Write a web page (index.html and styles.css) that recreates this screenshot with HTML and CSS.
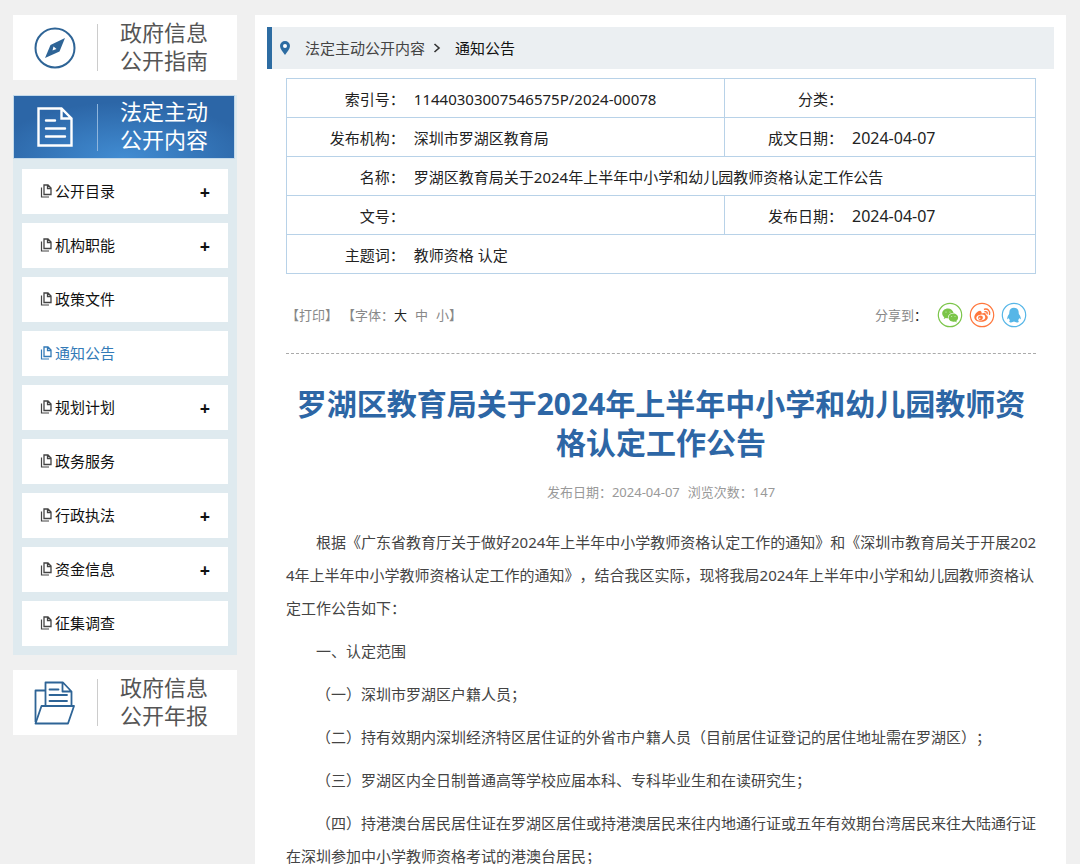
FILE: index.html
```html
<!DOCTYPE html>
<html lang="zh-CN">
<head>
<meta charset="utf-8">
<meta name="viewport" content="width=device-width, initial-scale=1">
<title>罗湖区教育局关于2024年上半年中小学和幼儿园教师资格认定工作公告</title>
<link rel="stylesheet" href="styles.css">
</head>
<body>
<svg class="sprite" aria-hidden="true">
  <symbol id="pages" viewBox="0 0 12 14">
    <path d="M4 1h4l3 3v6.500H4z M7.500 1v3.500H11" fill="none" stroke="currentColor" stroke-width="1.300"/>
    <path d="M1.500 3.500v9.500h7.500" fill="none" stroke="currentColor" stroke-width="1.200"/>
  </symbol>
</svg>
<div class="page">
  <aside class="sidebar">
    <a class="entry" href="#">
      <span class="entry-icon">
        <svg width="42" height="42" viewBox="0 0 42 42"><circle cx="21" cy="21" r="19.500" fill="none" stroke="#2e6496" stroke-width="2"/><path d="M31 11 25.500 24.500 11 31 16.500 18z" fill="#2e6496"/><path d="M18.500 23.500l1-4 3 2.500z" fill="#fff"/></svg>
      </span>
      <span class="entry-text">政府信息<br>公开指南</span>
    </a>
    <section class="group">
      <a class="entry entry-active" href="#">
        <span class="entry-icon">
          <svg width="36" height="40" viewBox="0 0 36 40" fill="none" stroke="#fff"><path d="M1.500 1.500h23l10 10v27h-33z M24.500 1.500v10h10" stroke-width="2.400"/><path d="M9 13.500h9M9 21.500h19M9 29.500h19" stroke-width="2.400" stroke-linecap="round"/></svg>
        </span>
        <span class="entry-text">法定主动<br>公开内容</span>
      </a>
      <ul class="menu">
        <li><a href="#"><svg class="pages"><use href="#pages"/></svg>公开目录</a><button aria-label="展开公开目录">+</button></li>
        <li><a href="#"><svg class="pages"><use href="#pages"/></svg>机构职能</a><button aria-label="展开机构职能">+</button></li>
        <li><a href="#"><svg class="pages"><use href="#pages"/></svg>政策文件</a></li>
        <li><a class="current" href="#"><svg class="pages"><use href="#pages"/></svg>通知公告</a></li>
        <li><a href="#"><svg class="pages"><use href="#pages"/></svg>规划计划</a><button aria-label="展开规划计划">+</button></li>
        <li><a href="#"><svg class="pages"><use href="#pages"/></svg>政务服务</a></li>
        <li><a href="#"><svg class="pages"><use href="#pages"/></svg>行政执法</a><button aria-label="展开行政执法">+</button></li>
        <li><a href="#"><svg class="pages"><use href="#pages"/></svg>资金信息</a><button aria-label="展开资金信息">+</button></li>
        <li><a href="#"><svg class="pages"><use href="#pages"/></svg>征集调查</a></li>
      </ul>
    </section>
    <a class="entry" href="#">
      <span class="entry-icon">
        <svg width="42" height="44" viewBox="0 0 42 44" fill="none" stroke="#2e6496" stroke-width="1.800" stroke-linejoin="round"><path d="M1.500 41V9.500h10M11.500 25V1.500h17.500l8.500 9V25M28.500 1.500v9h9"/><path d="M7.500 25h32.500l-6 17.500H1.500z"/><path d="M15.500 8.500h9M15.500 14h17.500M15.500 20h17.500" stroke-linecap="round"/></svg>
      </span>
      <span class="entry-text">政府信息<br>公开年报</span>
    </a>
  </aside>

  <main class="content">
    <nav class="crumbs" aria-label="当前位置">
      <svg class="pin" width="10" height="14" viewBox="0 0 10 14"><path d="M5 0a5 5 0 0 0-5 5c0 3 3 6 5 9 2-3 5-6 5-9a5 5 0 0 0-5-5z" fill="#2d6ca2"/><circle cx="5" cy="5" r="2" fill="#fff"/></svg>
      <a href="#">法定主动公开内容</a>
      <svg class="arrow" width="8" height="10" viewBox="0 0 8 10"><path d="M1.500 1l4.500 4-4.500 4" fill="none" stroke="#333" stroke-width="1.600"/></svg>
      <a class="here" href="#">通知公告</a>
    </nav>
    <div class="article-wrap">
      <table class="info">
        <colgroup><col class="c-label"><col class="c-wide"><col class="c-label"><col></colgroup>
        <tr><th scope="row">索引号：</th><td>11440303007546575P/2024-00078</td><th scope="row" class="split">分类：</th><td></td></tr>
        <tr><th scope="row">发布机构：</th><td>深圳市罗湖区教育局</td><th scope="row" class="split">成文日期：</th><td class="date">2024-04-07</td></tr>
        <tr><th scope="row">名称：</th><td colspan="3">罗湖区教育局关于2024年上半年中小学和幼儿园教师资格认定工作公告</td></tr>
        <tr><th scope="row">文号：</th><td></td><th scope="row" class="split">发布日期：</th><td class="date">2024-04-07</td></tr>
        <tr><th scope="row">主题词：</th><td colspan="3">教师资格 认定</td></tr>
      </table>
      <div class="tools">
        <div class="tools-left">
          <button>【打印】</button>
          <span class="sizes">【字体：<button class="on">大</button><button class="mid">中</button><button>小</button>】</span>
        </div>
        <div class="share">
          <span>分享到<b>：</b></span>
          <a href="#" aria-label="微信"><svg width="26" height="26" viewBox="0 0 26 26"><circle cx="13" cy="13" r="11.700" fill="#fff" stroke="#7bc549" stroke-width="1.200"/><path d="M11 6.500c-3.300 0-5.800 2.200-5.800 4.900 0 1.500.8 2.900 2.100 3.800l-.6 1.900 2.200-1.100c.7.200 1.400.3 2.100.3-.4-3.400 2.400-5.400 5.600-5.300-.6-2.600-3-4.500-5.600-4.500z" fill="#7bc549"/><path d="M16.300 11.500c-2.800 0-4.800 1.800-4.800 4.100s2.200 4.100 4.800 4.100c.6 0 1.200-.1 1.700-.2l1.800.9-.5-1.500c1.100-.8 1.800-1.900 1.800-3.300 0-2.300-2.200-4.100-4.800-4.100z" fill="#7bc549"/><g fill="#d9f0cb"><circle cx="9" cy="10" r=".6"/><circle cx="13" cy="10" r=".6"/><circle cx="14.700" cy="14.500" r=".5"/><circle cx="18" cy="14.500" r=".5"/></g></svg></a>
          <a href="#" aria-label="微博"><svg width="26" height="26" viewBox="0 0 26 26"><circle cx="13" cy="13" r="11.700" fill="#fff" stroke="#ff763b" stroke-width="1.200"/><path d="M11.500 9c-1.500-1-6.200 3-6.200 6.200 0 2.900 3.400 4.600 6.700 4.600 4.200 0 6.800-2.300 6.800-4.400 0-1.400-1-2-2-2.300.6-1.700-.8-2.700-4.200-1.500.2-1.200-.1-2.100-1.100-2.600z" fill="#ff763b"/><ellipse cx="11.800" cy="15.600" rx="4.500" ry="2.900" fill="#fff" transform="rotate(-8 11.800 15.600)"/><circle cx="11.500" cy="15.800" r="2.400" fill="#ff763b"/><circle cx="10.800" cy="16.300" r=".7" fill="#fff"/><path d="M15.500 7.200c3.300-.8 5.900 1.700 5 5M16 9.700c1.500-.3 2.500.7 2.100 2.100" fill="none" stroke="#ff763b" stroke-width="1.400" stroke-linecap="round"/></svg></a>
          <a href="#" aria-label="QQ"><svg width="26" height="26" viewBox="0 0 26 26"><circle cx="13" cy="13" r="11.700" fill="#fff" stroke="#56b6e7" stroke-width="1.200"/><path d="M13 5.700c-2.900 0-4.700 2-4.700 4.700 0 1.300-.2 1.700-.9 2.700-.9 1.300-1.300 2.700-1.100 3.800.2.700 1 .1 1.500-.8.200.9.600 1.600 1.200 2.200-.9.400-1.200 1.900.4 2.100 1.200.2 2.900-.2 3.600-.8.700.6 2.400 1 3.600.8 1.600-.2 1.300-1.700.4-2.100.6-.6 1-1.300 1.200-2.200.5.900 1.300 1.500 1.500.8.200-1.100-.2-2.500-1.100-3.800-.7-1-.9-1.400-.9-2.700 0-2.700-1.800-4.700-4.700-4.700z" fill="#56b6e7"/></svg></a>
        </div>
      </div>
      <article>
        <h1>罗湖区教育局关于2024年上半年中小学和幼儿园教师资格认定工作公告</h1>
        <p class="meta"><span>发布日期：2024-04-07</span><span>浏览次数：147</span></p>
        <div class="text">
          <p>根据《广东省教育厅关于做好2024年上半年中小学教师资格认定工作的通知》和《深圳市教育局关于开展2024年上半年中小学教师资格认定工作的通知》，结合我区实际，现将我局2024年上半年中小学和幼儿园教师资格认定工作公告如下：</p>
          <p>一、认定范围</p>
          <p>（一）深圳市罗湖区户籍人员；</p>
          <p>（二）持有效期内深圳经济特区居住证的外省市户籍人员（目前居住证登记的居住地址需在罗湖区）；</p>
          <p>（三）罗湖区内全日制普通高等学校应届本科、专科毕业生和在读研究生；</p>
          <p>（四）持港澳台居民居住证在罗湖区居住或持港澳居民来往内地通行证或五年有效期台湾居民来往大陆通行证在深圳参加中小学教师资格考试的港澳台居民；</p>
        </div>
      </article>
    </div>
  </main>
</div>
</body>
</html>
```

FILE: styles.css
```css
* { box-sizing: border-box; }
body {
  margin: 0;
  background: #f0f0f0;
  color: #222;
  font: 15px/24px "Noto Sans", "Noto Sans CJK SC", sans-serif;
  text-spacing-trim: space-all;
}
a { color: inherit; text-decoration: none; }
button {
  padding: 0;
  border: 0;
  background: none;
  color: inherit;
  font: inherit;
  cursor: pointer;
}
svg { display: block; flex: none; }
.sprite { position: absolute; width: 0; height: 0; }
.page {
  display: flex;
  align-items: flex-start;
  gap: 18px;
  padding: 15px 14px 0 13px;
}

.sidebar {
  flex: none;
  display: flex;
  flex-direction: column;
  gap: 15px;
  width: 224px;
}
.entry {
  display: flex;
  align-items: center;
  height: 65px;
  background: #fff;
  color: #555;
}
.entry-icon {
  display: flex;
  align-items: center;
  justify-content: center;
  width: 85px;
  height: 47px;
  border-right: 1px solid #ccc;
}
.entry-text { padding: 0 0 4px 22px; font-size: 22px; line-height: 28px; }
.group { background: #dfeaef; }
.entry-active {
  height: 64px;
  margin-right: 2px;
  border: 1px solid #c3d9ea;
  background: radial-gradient(ellipse 60% 90% at 50% 100%, #418cd2, #2c66a7);
  color: #fff;
}
.entry-active .entry-icon { width: 84px; padding-right: 2px; border-color: #8fb5dc; }
.menu {
  display: flex;
  flex-direction: column;
  gap: 9px;
  margin: 0;
  padding: 10px 9px 9px;
  list-style: none;
}
.menu li {
  display: flex;
  align-items: center;
  justify-content: space-between;
  height: 45px;
  padding: 0 18px 2px;
  background: #fff;
}
.menu a { display: flex; align-items: center; gap: 3px; color: #111; }
.menu .current { color: #337ab7; }
.pages { width: 12px; height: 14px; color: #444; }
.current .pages { color: #337ab7; }
.menu button { padding-top: 2px; color: #111; font-size: 18px; font-weight: 700; }

.content {
  flex: 1;
  min-width: 0;
  padding: 12px;
  background: #fff;
}
.crumbs {
  display: flex;
  align-items: center;
  height: 42px;
  padding-left: 8px;
  border-left: 5px solid #2d6ca2;
  background: #ebeff2;
  color: #444;
}
.pin { margin-right: 15px; }
.arrow { margin: 0 14px 0 8px; }
.here { color: #111; }
.article-wrap { padding: 9px 18px 0 19px; }
.info {
  width: 100%;
  border: 1px solid #b8d2e8;
  border-collapse: collapse;
  table-layout: fixed;
}
.c-label { width: 17%; }
.c-wide { width: 41.5%; }
.info tr { height: 39px; border-bottom: 1px solid #b8d2e8; }
.info th, .info td { padding: 2px 0 0; font-weight: 400; }
.info th { padding-right: 9px; text-align: right; }
.info .split { border-left: 1px solid #b8d2e8; }
.info td { text-align: left; }
.info .date { font-size: 16px; }
.tools {
  display: flex;
  justify-content: space-between;
  align-items: center;
  height: 80px;
  padding-top: 3px;
  border-bottom: 1px dashed #aaa;
  color: #888;
  font-size: 13px;
}
.tools-left { display: flex; gap: 4px; }
.tools .on { color: #222; }
.mid { margin: 0 8px; }
.share { display: flex; align-items: center; gap: 6px; padding-right: 9px; }
.share span { margin-right: 4px; }
.share b { color: #222; font-weight: 400; }
h1 {
  margin: 30px 0 0;
  color: #2d66a5;
  font-size: 30px;
  line-height: 39px;
  text-align: center;
  word-break: break-all;
}
.meta {
  display: flex;
  justify-content: center;
  gap: 8px;
  margin: 18px 0 22px;
  color: #999;
  font-size: 13px;
}
.text { margin-right: -6px; color: #444; line-height: 33px; word-break: break-all; }
.text p { margin: 0 0 10px; text-indent: 30px; }
```
